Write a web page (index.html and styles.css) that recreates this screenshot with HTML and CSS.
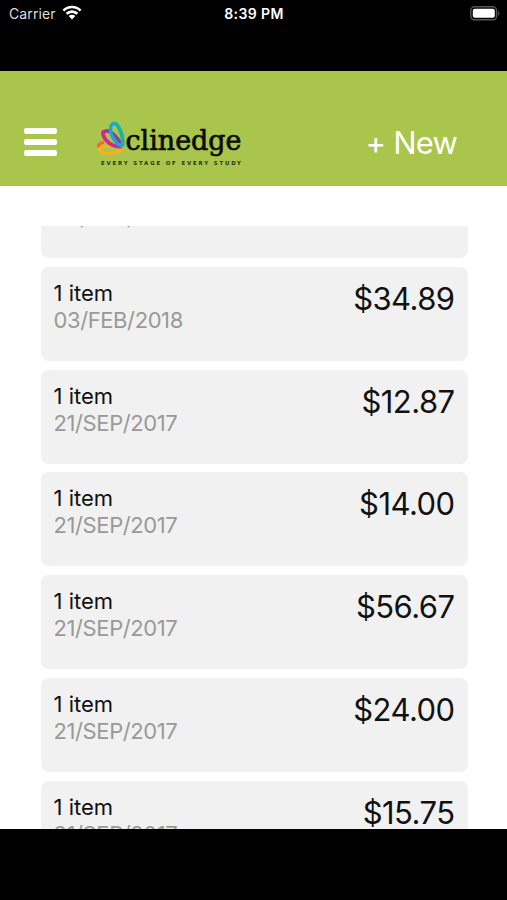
FILE: index.html
```html
<!DOCTYPE html>
<html lang="en">

<head>
  <meta charset="UTF-8">
  <meta name="viewport" content="width=device-width, initial-scale=1.0">
  <title>Clinedge</title>
  <link rel="stylesheet" href="styles.css">
</head>

<body>
  <div class="status-bar">
    <div class="carrier">
      <span>Carrier</span>
      <svg class="wifi" width="20" height="15" viewBox="0 0 20 15">
        <path d="M1.4 5.6C6.2.8 13.8.8 18.6 5.6M4.6 8.8c3-2.9 7.8-2.9 10.8 0" fill="none" stroke="#fff" stroke-width="2.6"/>
        <path d="M10 14.4 6.7 11.1c1.8-1.7 4.8-1.7 6.6 0z" fill="#fff"/>
      </svg>
    </div>
    <div class="time">8:39 PM</div>
    <svg class="battery" width="31" height="15" viewBox="0 0 31 15">
      <rect x=".8" y=".8" width="25.8" height="13" rx="3.8" fill="none" stroke="#555" stroke-width="1.4"/>
      <rect x="2.8" y="2.8" width="22" height="9" rx="2" fill="#fff"/>
      <path d="M28.1 5v4.8c1.9-.9 1.9-3.9 0-4.8z" fill="#555"/>
    </svg>
  </div>

  <header class="header">
    <div class="menu">
      <span></span>
      <span></span>
      <span></span>
    </div>
    <svg class="logo" width="150" height="50" viewBox="0 0 150 50">
      <g fill="none">
        <path d="M9 23.5c-5 .5-7 3-4.5 5" stroke="#f26a2a" stroke-width="3"/>
        <path d="M3.5 30.500c1-4 22-4 23.5-1 -1 5-21 7.500-23.500 1z" stroke="#fbb01c" stroke-width="3"/>
        <path d="M9 13c5-4 13 4 18 14" stroke="#8d3f98" stroke-width="3.6"/>
        <path d="M9 12c-4 4 5 17 18 15.5" stroke="#d4268c" stroke-width="3.8"/>
        <path d="M18 4.500c5-1.500 11 12 9.500 23" stroke="#17b3a3" stroke-width="3.8"/>
        <path d="M18.5 4.500c-6 2-3 18 9 23" stroke="#1ba5dc" stroke-width="3.4"/>
      </g>
      <text class="logo-name" x="30.5" y="31" textLength="116" lengthAdjust="spacingAndGlyphs">clinedge</text>
      <text class="logo-tagline" x="6" y="46" textLength="140">EVERY STAGE OF EVERY STUDY</text>
    </svg>
    <div class="new">+ New</div>
  </header>

  <main class="content">
    <div class="list">
      <div class="card">
        <div>
          <div class="items">1 item</div>
          <div class="date">03/FEB/2018</div>
        </div>
      </div>
      <div class="card">
        <div>
          <div class="items">1 item</div>
          <div class="date">03/FEB/2018</div>
        </div>
        <div class="price">$34.89</div>
      </div>
      <div class="card">
        <div>
          <div class="items">1 item</div>
          <div class="date">21/SEP/2017</div>
        </div>
        <div class="price">$12.87</div>
      </div>
      <div class="card">
        <div>
          <div class="items">1 item</div>
          <div class="date">21/SEP/2017</div>
        </div>
        <div class="price">$14.00</div>
      </div>
      <div class="card">
        <div>
          <div class="items">1 item</div>
          <div class="date">21/SEP/2017</div>
        </div>
        <div class="price">$56.67</div>
      </div>
      <div class="card">
        <div>
          <div class="items">1 item</div>
          <div class="date">21/SEP/2017</div>
        </div>
        <div class="price">$24.00</div>
      </div>
      <div class="card">
        <div>
          <div class="items">1 item</div>
          <div class="date">21/SEP/2017</div>
        </div>
        <div class="price">$15.75</div>
      </div>
    </div>
  </main>
</body>

</html>
```
FILE: styles.css
```css
* {
  box-sizing: border-box;
}

body {
  font-family: Inter, "Liberation Sans", sans-serif;
  background-color: #000;
  color: #111;
  margin: 0;
  height: 900px;
  overflow: hidden;
}

.status-bar {
  display: grid;
  grid-template-columns: 1fr auto 1fr;
  align-items: start;
  height: 71px;
  padding: 5px 6px 0 9px;
  color: #fff;
  font-size: 14px;
  line-height: 18px;
}

.carrier {
  display: flex;
  gap: 6px;
  color: #ddd;
  letter-spacing: 0.1px;
}

.time {
  font-weight: 600;
  letter-spacing: 0.4px;
  margin-right: 2px;
}

.battery {
  justify-self: end;
  margin-top: 1px;
}

.header {
  display: flex;
  align-items: flex-start;
  height: 115px;
  padding: 48px 50px 0 24px;
  background-color: #a9c54b;
}

.menu {
  display: flex;
  flex-direction: column;
  gap: 5px;
  width: 33px;
  margin-top: 9px;
}

.menu span {
  height: 6px;
  background-color: #fff;
  border-radius: 2px;
}

.logo {
  margin-left: 38px;
}

.logo-name {
  font-family: "DejaVu Serif", serif;
  font-size: 28px;
  fill: #0b0d05;
  stroke: #0b0d05;
  stroke-width: 0.7px;
}

.logo-tagline {
  font-family: "DejaVu Sans", sans-serif;
  font-size: 5.4px;
  font-weight: 700;
  fill: #2c3312;
}

.new {
  margin-left: auto;
  margin-top: 6px;
  color: #fff;
  font-size: 31px;
  line-height: 36px;
  letter-spacing: -0.8px;
}

.content {
  height: 643px;
  padding: 40px 39.5px 0 40.5px;
  background-color: #fff;
}

/* scrolled part way down, so the first card is cut off */
.list {
  display: flow-root;
  height: 603px;
  overflow: hidden;
}

.card {
  display: flex;
  justify-content: space-between;
  height: 94px;
  margin-bottom: 8.8px;
  padding: 13px;
  background-color: #f1f1f1;
  border-radius: 8px;
}

.card:first-child {
  margin-top: -62.1px;
}

.items,
.date {
  font-size: 22px;
  line-height: 27px;
}

.date {
  color: #999;
  letter-spacing: -0.4px;
}

.price {
  font-size: 31px;
  line-height: 38px;
  letter-spacing: -0.55px;
}
```
